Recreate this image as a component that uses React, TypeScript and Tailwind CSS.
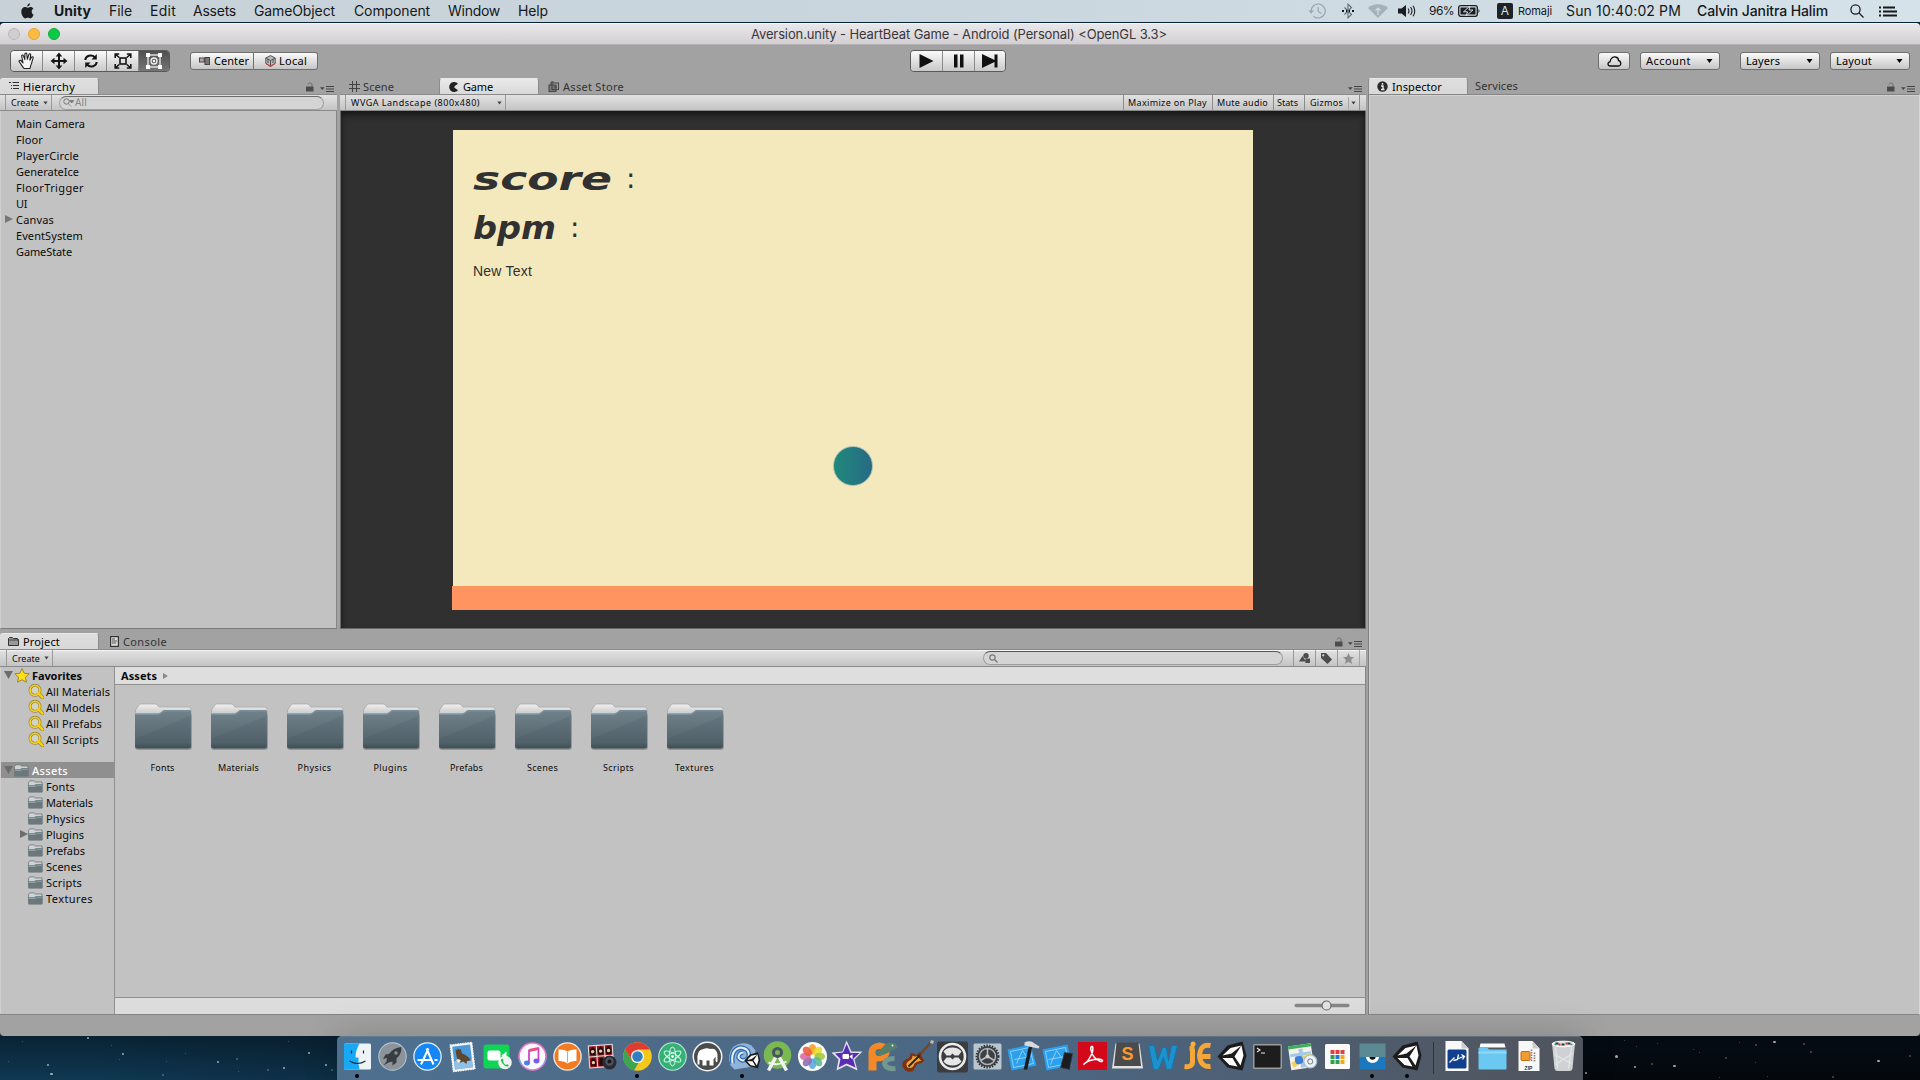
import React, { useLayoutEffect, useRef } from "react";

const UI = "font-['Lucida_Grande','Noto_Sans',sans-serif]";
const SF = "font-['Inter','Liberation_Sans',sans-serif]";

/* One-line label whose tracking is adjusted so that it spans w pixels. */
function T({ w, c = "", children }: { w: number; c?: string; children: string }) {
  const ref = useRef<HTMLSpanElement>(null);
  useLayoutEffect(() => {
    const el = ref.current;
    if (!el) return;
    el.style.letterSpacing = "0px";
    const natural = el.getBoundingClientRect().width;
    el.style.letterSpacing = `${(w - natural) / children.length}px`;
  }, [w, children]);
  return (
    <span ref={ref} className={`inline-block shrink-0 whitespace-pre ${c}`}>
      {children}
    </span>
  );
}

/* Same idea for the display lettering, stretched horizontally. */
function Wide({ w, children }: { w: number; children: string }) {
  const ref = useRef<HTMLSpanElement>(null);
  useLayoutEffect(() => {
    const el = ref.current;
    if (!el) return;
    el.style.transform = "none";
    el.style.transform = `scaleX(${w / el.getBoundingClientRect().width})`;
  }, [w]);
  return (
    <span className="inline-block" style={{ width: w }}>
      <span ref={ref} className="inline-block origin-left font-bold italic">{children}</span>
    </span>
  );
}

const Down = ({ c = "" }: { c?: string }) => (
  <svg width="7" height="4" viewBox="0 0 7 4" className={`shrink-0 ${c}`}><path d="M0.5 0h6L3.5 4z" fill="currentColor" /></svg>
);

const Lock = ({ c = "" }: { c?: string }) => (
  <svg width="8" height="10" viewBox="0 0 8 10" className={`shrink-0 ${c}`}>
    <rect x="0" y="4.5" width="7.5" height="5" fill="#4c4c4c" />
    <path d="M2 2.5C2.5 0.5 6 0.3 6 2.8V5" fill="none" stroke="#6a6a6a" strokeWidth="1" />
  </svg>
);

const PaneMenu = ({ c = "" }: { c?: string }) => (
  <svg width="14" height="6" viewBox="0 0 14 6" className={`shrink-0 ${c}`}>
    <path d="M0 1.3h4.6L2.3 4z" fill="#444" />
    <path d="M6 0.5h8M6 3h8M6 5.5h8" stroke="#444" strokeWidth="1" />
  </svg>
);

function MenuBar() {
  return (
    <div className={`${SF} flex h-[22px] items-center bg-linear-to-r from-[#c8d1d8] via-[#c9d6de] to-[#d5e2ea] pr-[23px] pl-[21px] text-[14px] leading-none text-[#15181c]`}>
      <svg width="13" height="16" viewBox="0 0 13 16" className="shrink-0">
        <path fill="#1b1d20" d="M9 0.3c.2 1.6-1.200 3.200-2.700 3.200C6.100 2 7.500.5 9 .3zM12.600 11.700c-.6 1.600-1.900 3.700-3.200 3.700-.9 0-1.300-.6-2.500-.6s-1.700.6-2.500.6C2.700 15.400.300 12 .300 8.700c0-3 1.900-4.600 3.700-4.600 1.100 0 1.900.7 2.700.7.700 0 1.700-.8 3-.8 1.100 0 2.100.6 2.700 1.500-2.400 1.500-2.200 5 .2 6.200z" />
      </svg>
      <T w={37} c="ml-[20px] font-bold">Unity</T>
      <T w={23} c="ml-[18px]">File</T>
      <T w={26} c="ml-[18px]">Edit</T>
      <T w={43} c="ml-[17px]">Assets</T>
      <T w={81} c="ml-[18px]">GameObject</T>
      <T w={76} c="ml-[19px]">Component</T>
      <T w={52} c="ml-[18px]">Window</T>
      <T w={30} c="ml-[18px]">Help</T>
      <div className="flex-1" />
      <svg width="19" height="16" viewBox="0 0 19 16" className="shrink-0 text-[#98a5ad]" fill="none" stroke="currentColor" strokeWidth="1.200">
        <path d="M3.200 8.500A7 7 0 1 1 5.500 13.200M10.200 4v4.500l3 2" /><path d="M0.500 7.500h5.400L3.200 10.700z" fill="currentColor" stroke="none" />
      </svg>
      <svg width="12" height="16" viewBox="0 0 12 16" className="ml-[15px] shrink-0" fill="none" stroke="#5d6a72" strokeWidth="1.100">
        <path d="M2.500 4.500l7 7L6 14.800V1.200l3.500 3.300-7 7" /><path d="M0 8h2M4 8h1M7 8h1M10 8h2" stroke="#15181c" strokeWidth="2" />
      </svg>
      <svg width="20" height="14" viewBox="0 0 20 14" className="ml-[14px] shrink-0"><path d="M0 4C5-1 15-1 20 4L10 14z" fill="#a5b1b9" /><path d="M10 11V4.500M7.500 6.500L10 4l2.500 2.500" stroke="#d2dde4" strokeWidth="1.200" fill="none" /></svg>
      <svg width="18" height="12" viewBox="0 0 18 12" className="ml-[10px] shrink-0"><path d="M0 3.500h3.500L8 0v12L3.500 8.500H0z" fill="#1b1d20" /><path d="M10 3.500q2 2.500 0 5M12.500 2q3 4 0 8M15 .8q3.500 5 0 10.500" stroke="#1b1d20" strokeWidth="1.100" fill="none" /></svg>
      <T w={25} c="ml-[13px] text-[12px]">96%</T>
      <svg width="23" height="12" viewBox="0 0 23 12" className="ml-[4px] shrink-0"><rect x=".7" y=".7" width="18.600" height="10.600" rx="2" fill="none" stroke="#1b1d20" strokeWidth="1.300" /><rect x="2.500" y="2.500" width="15" height="7" fill="#1b1d20" /><path d="M20.500 4q2 2 0 4z" fill="#1b1d20" /><path d="M12 1L5.500 6.800h4L8 11l7-6h-4z" fill="#1b1d20" stroke="#d2dde4" strokeWidth="1" /></svg>
      <div className="ml-[16px] flex h-4 w-4 shrink-0 items-center justify-center rounded-[2px] bg-[#1e2327] text-[12px] text-[#d5e2ea]">A</div>
      <T w={34} c="ml-[5px] text-[11px]">Romaji</T>
      <T w={115} c="ml-[14px]">Sun 10:40:02 PM</T>
      <T w={131} c="ml-4 font-medium">Calvin Janitra Halim</T>
      <svg width="14" height="14" viewBox="0 0 14 14" className="ml-[22px] shrink-0" fill="none" stroke="#1b1d20" strokeWidth="1.300"><circle cx="5.500" cy="5.500" r="4.600" /><path d="M9 9l4.500 4.500" /></svg>
      <svg width="18" height="11" viewBox="0 0 18 11" className="ml-[15px] shrink-0" stroke="#15181c" strokeWidth="1.800"><path d="M0 1.500h2M4 1.500h12M0 5.500h2M4 5.500h14M0 9.500h2M4 9.500h14" /></svg>
    </div>
  );
}

function TitleBar() {
  return (
    <div className={`${SF} flex h-[22px] items-center rounded-t-[4px] border-t border-b border-t-[#f6f4f6] border-b-[#b4b0b3] bg-linear-to-b from-[#eae7ea] to-[#d3d0d3] pl-2`}>
      <div className="h-3 w-3 rounded-full border border-[#bab7ba] bg-[#d0ced0]" />
      <div className="ml-2 h-3 w-3 rounded-full border border-[#e8a233] bg-[#fdbc40]" />
      <div className="ml-2 h-3 w-3 rounded-full border border-[#0faf35] bg-[#0dc94a]" />
      <T w={416} c="ml-[691px] text-[13px] leading-none text-[#39363a]">Aversion.unity - HeartBeat Game - Android (Personal) &lt;OpenGL 3.3&gt;</T>
    </div>
  );
}

const BTN = "flex shrink-0 items-center border-[#6e6e6e] bg-linear-to-b from-[#fafafa] to-[#c6c6c6]";

const tools = [
  <svg width="18" height="18" viewBox="0 0 18 18" fill="#f5f5f5" stroke="#222" strokeWidth="1.100" strokeLinejoin="round"><path d="M6 16.500C4 14 2.500 11.500 1 9.500 1 8 3 8 3.600 9.300L5 11 3.700 4.200c-.2-1.500 1.400-1.700 1.800-.3L6.800 7.600 6.900 2c0-1.300 1.700-1.300 1.900 0L9.300 7.300 10.900 2.500c.5-1.200 2-.8 1.800.5l-.9 5.200 1.700-3c.8-1 2-.3 1.600.9-.8 2.200-1.100 4.500-2.100 6.800-.5 1.200-.7 2.300-1 3.600z" /></svg>,
  <svg width="18" height="18" viewBox="0 0 18 18" fill="#151515"><path d="M9 .5l3.300 4H10v3.500h3.500V5.700l4 3.300-4 3.300V10H10v3.500h2.300l-3.300 4-3.300-4H8V10H4.500v2.300L.5 9l4-3.300V8H8V4.500H5.700z" /></svg>,
  <svg width="18" height="16" viewBox="0 0 18 16" fill="none" stroke="#151515" strokeWidth="2"><path d="M3.300 7C3.500 2.800 9.500.8 12.800 4.200M14.700 9c-.2 4.200-6.200 6.200-9.500 2.800" /><path d="M14.800 1v5.500H9.500zM3.200 15V9.500h5.300z" fill="#151515" stroke="none" /></svg>,
  <svg width="18" height="16" viewBox="0 0 18 16" fill="none" stroke="#151515" strokeWidth="1.600"><rect x="6" y="5" width="6" height="6" /><path d="M1.200 5V1h4M1.200 1l4 3.500M16.800 5V1h-4M16.800 1l-4 3.500M1.200 11v4h4M1.200 15l4-3.500M16.800 11v4h-4M16.800 15l-4-3.500" /></svg>,
  <svg width="18" height="18" viewBox="0 0 18 18" fill="none" stroke="#f0f0f0" strokeWidth="1.300"><rect x="3" y="3" width="12" height="12" /><g fill="#fff" stroke="none"><rect x="1" y="1" width="4" height="4" /><rect x="13" y="1" width="4" height="4" /><rect x="1" y="13" width="4" height="4" /><rect x="13" y="13" width="4" height="4" /><circle cx="9" cy="9" r="1.200" /></g><circle cx="9" cy="9" r="3" /></svg>,
];

function ToolBar() {
  return (
    <div className={`${UI} flex h-[33px] items-start pt-[5px] text-[11px] leading-none text-black`}>
      <div className="ml-[10px] flex h-[22px] w-40 overflow-hidden rounded-[4px] border border-[#5a5a5a]">
        {tools.map((t, i) => (
          <div key={i} className={`flex items-center justify-center border-[#8a8a8a] ${i < 4 ? "w-8 border-r bg-linear-to-b from-[#fafafa] to-[#c9c9c9]" : "flex-1 bg-linear-to-b from-[#505050] to-[#767676]"}`}>{t}</div>
        ))}
      </div>
      <div className={`${BTN} mt-[2px] ml-5 h-[18px] w-16 rounded-l-[3px] border pl-2`}>
        <svg width="11" height="8" viewBox="0 0 11 8"><rect x=".5" y="1" width="5" height="4" fill="#aaa" stroke="#444" /><rect x="6" y=".5" width="4.500" height="7" fill="#777" stroke="#444" /><path d="M4 3h3" stroke="#c33" /></svg>
        <T w={35} c="-mt-px ml-1">Center</T>
      </div>
      <div className={`${BTN} mt-[2px] h-[18px] w-16 rounded-r-[3px] border border-l-0 pl-[11px]`}>
        <svg width="11" height="12" viewBox="0 0 11 12"><path d="M5.500.6L10.200 3v5.500L5.500 11.400.8 8.500V3z" fill="#bbb" stroke="#555" /><path d="M.8 3l4.700 2.500L10.200 3M5.500 5.500v6M3 4v4M8 4v4" stroke="#555" fill="none" /><path d="M1 8.500l4.500 2.800L10 8.500" stroke="#c44" fill="none" strokeWidth="1.100" /></svg>
        <T w={28} c="-mt-px ml-[3px]">Local</T>
      </div>
      <div className="ml-[592px] flex h-[22px] w-24 overflow-hidden rounded-[4px] border border-[#5a5a5a]">
        <div className="flex w-8 items-center justify-center border-r border-[#8a8a8a] bg-linear-to-b from-[#fafafa] to-[#c9c9c9]"><svg width="15" height="14" viewBox="0 0 15 14"><path d="M.5 0l14 7-14 7z" fill="#111" /></svg></div>
        <div className="flex w-8 items-center justify-center border-r border-[#8a8a8a] bg-linear-to-b from-[#fafafa] to-[#c9c9c9]"><svg width="10" height="14" viewBox="0 0 10 14"><path d="M0 .5h3.500v13H0zM6 .5h3.500v13H6z" fill="#111" /></svg></div>
        <div className="flex flex-1 items-center justify-center bg-linear-to-b from-[#fafafa] to-[#c9c9c9]"><svg width="16" height="14" viewBox="0 0 16 14"><path d="M0 0l12.500 6V.5h3v13h-3V8L0 14z" fill="#111" /></svg></div>
      </div>
      <div className="flex-1" />
      <div className={`${BTN} mt-[2px] h-[18px] w-8 justify-center rounded-[3px] border`}>
        <svg width="15" height="11" viewBox="0 0 15 11"><path d="M3.500 10C.200 10 .200 6.200 3 5.800 3.500 2 6.500.5 8.500 1c2 .3 3 2 3 3.500 2.800.5 3.200 5.500 0 5.500z" fill="none" stroke="#111" strokeWidth="1.300" /></svg>
      </div>
      {([["Account", 45, "ml-[10px]"], ["Layers", 34, "ml-5"], ["Layout", 36, "ml-[10px] mr-[10px]"]] as [string, number, string][]).map(([l, w, m]) => (
        <div key={l} className={`${BTN} ${m} mt-[2px] h-[18px] w-20 justify-between rounded-[3px] border pr-[6px] pl-[5px]`}>
          <T w={w} c="-mt-px">{l}</T><Down />
        </div>
      ))}
    </div>
  );
}

const TAB = "flex items-center rounded-t-[3px] border border-b-0 border-[#8b8b8b] border-t-[#e8e8e8] bg-linear-to-b from-[#dedede] to-[#d9d9d9] text-black";
const BAR = "flex items-center border-t border-b border-t-[#8a8a8a] border-b-[#8a8a8a] bg-linear-to-b from-[#e2e2e2] to-[#c4c4c4]";

function Hierarchy() {
  const rows: [string, number][] = [["Main Camera", 69], ["Floor", 27], ["PlayerCircle", 63], ["GenerateIce", 63], ["FloorTrigger", 68], ["UI", 11], ["Canvas", 38], ["EventSystem", 67], ["GameState", 56]];
  return (
    <div className="flex w-[337px] flex-col">
      <div className="flex h-4 items-end">
        <div className={`${TAB} h-4 w-[99px] border-l-0 pl-[9px]`}>
          <svg width="10" height="9" viewBox="0 0 10 9" stroke="#333"><path d="M0 .5h2M3.500.5h6.500M2 3.500h1M4 3.500h6M2 6.500h1M4 6.500h6" /></svg>
          <T w={52} c="ml-1">Hierarchy</T>
        </div>
        <Lock c="ml-[207px] mb-[2px]" /><PaneMenu c="ml-[6px] mb-[2px]" />
      </div>
      <div className={`${BAR} h-[17px] text-[9px]`}>
        <div className="ml-[5px] flex h-full w-[47px] items-center border-r border-l border-[#9a9a9a] pl-[5px]"><T w={28}>Create</T><Down c="ml-1 w-[5px] text-[#444]" /></div>
        <div className="ml-[7px] flex h-[14px] w-[265px] items-center rounded-full border border-[#a0a0a0] border-t-[#6b6b6b] bg-[#d4d4d4] pl-[3px] text-[#888]">
          <svg width="11" height="9" viewBox="0 0 11 9"><circle cx="3.500" cy="3.500" r="2.700" fill="none" stroke="#777" /><path d="M5.500 5.500l2.500 3M6.500 2.500h4.500L8.700 5z" fill="#777" stroke="#777" strokeWidth=".7" /></svg>
          <T w={12} c="-mt-px ml-px text-[10px]">All</T>
        </div>
      </div>
      <div className="flex-1 border-r border-b border-l border-r-[#858585] border-b-[#7c7c7c] border-l-[#d0d0d0] bg-[#c2c2c2] pt-1">
        {rows.map(([l, w]) => (
          <div key={l} className="flex h-4 items-center pl-[3px]">
            <div className="w-3">{l === "Canvas" && <svg width="9" height="8" viewBox="0 0 9 8"><path d="M1 0l8 4-8 4z" fill="#777" /></svg>}</div>
            <T w={w}>{l}</T>
          </div>
        ))}
      </div>
    </div>
  );
}

function Game() {
  return (
    <div className="ml-[3px] flex w-[1026px] flex-col">
      <div className="flex h-4 items-end text-[#333]">
        <div className="flex h-4 items-center pl-[9px]">
          <svg width="11" height="11" viewBox="0 0 11 11" stroke="#444"><path d="M3.500 0v11M7.500 0v11M0 3.500h11M0 7.500h11" /></svg>
          <T w={31} c="ml-[3px]">Scene</T>
        </div>
        <div className={`${TAB} ml-[45px] h-4 w-[100px] from-[#eaeaea] pl-[9px]`}>
          <svg width="10" height="10" viewBox="0 0 10 10"><path d="M9 1.800A5 5 0 1 0 9 8.200L5.500 5.800V4.200z" fill="#222" /></svg>
          <T w={30} c="ml-1">Game</T>
        </div>
        <div className="ml-[9px] flex h-4 items-center">
          <svg width="11" height="11" viewBox="0 0 11 11"><rect x="1" y="4" width="7" height="6.500" fill="#777" stroke="#444" /><rect x="4" y="2" width="6.500" height="6.500" fill="none" stroke="#444" /><path d="M3 4V1h3M6 6h3" stroke="#444" fill="none" /></svg>
          <T w={61} c="ml-[4px]">Asset Store</T>
        </div>
        <div className="flex-1" /><PaneMenu c="mr-1 mb-[2px]" />
      </div>
      <div className={`${BAR} h-[17px] text-[9px]`}>
        <div className="ml-[5px] flex h-full w-[161px] items-center border-r border-l border-[#9a9a9a] pl-[5px]"><T w={129}>WVGA Landscape (800x480)</T><Down c="ml-[17px] w-[5px] text-[#444]" /></div>
        <div className="flex-1" />
        <div className="flex h-full w-[89px] items-center border-l border-[#8c8c8c] pl-1"><T w={79}>Maximize on Play</T></div>
        <div className="flex h-full w-[61px] items-center border-l border-[#8c8c8c] pl-1"><T w={51}>Mute audio</T></div>
        <div className="flex h-full w-[31px] items-center border-l border-[#8c8c8c] pl-[3px]"><T w={21}>Stats</T></div>
        <div className="flex h-full w-[56px] items-center border-r border-l border-[#8c8c8c] pl-[5px]"><T w={33}>Gizmos</T><div className="ml-[5px] h-3 w-px bg-[#a5a5a5]" /><Down c="ml-[2px] w-[5px] text-[#444]" /></div>
        <div className="w-[6px]" />
      </div>
      <div className="flex flex-1 justify-start border-r border-b border-l border-[#6a6a6a] bg-[#303030] pt-[19px] pl-[112px] shadow-[inset_0_4px_6px_#161616]">
        <div className="-ml-px flex h-[480px] w-[801px] flex-col overflow-hidden">
          <div className="relative ml-px flex-1 bg-[#f4e8bd] text-[#313131]">
            <div className="flex h-[66px] items-end pl-5 font-['DejaVu_Sans',sans-serif] text-[32px] leading-[34px]"><Wide w={139}>score</Wide><span className="ml-[14px] text-[28px]">:</span></div>
            <div className="mt-[15px] flex h-[34px] items-end pl-5 font-['DejaVu_Sans',sans-serif] text-[32px] leading-[34px]"><Wide w={83}>bpm</Wide><span className="ml-[14px] text-[28px]">:</span></div>
            <div className="mt-[19px] pl-5 font-['Liberation_Sans',sans-serif] text-[14px]"><T w={59}>New Text</T></div>
            <div className="absolute top-[316px] left-[380px] h-[40px] w-[40px] rounded-full border border-[#a9c0ae] bg-linear-to-r from-[#20897a] to-[#276a86]" />
          </div>
          <div className="h-6 bg-[#ff9460]" />
        </div>
      </div>
    </div>
  );
}

const SmallFolder = () => (
  <svg width="15" height="13" viewBox="0 0 15 13" className="shrink-0"><path d="M.5 12V2.500L2 .8h4L7.500 2H14v10z" fill="#cdd3d4" stroke="#6c7577" strokeWidth=".8" /><path d="M.5 5.300h6L7.800 4h6.700v8.200H.5z" fill="#6a787c" /><path d="M1 6.500h6L8.500 5.200H14" stroke="#9cabae" fill="none" strokeWidth=".8" /></svg>
);
const Mag = () => (
  <svg width="16" height="15" viewBox="0 0 16 15" className="shrink-0"><path d="M10.500 9.500l4 4" stroke="#8a6d10" strokeWidth="3.800" strokeLinecap="round" /><circle cx="7" cy="6.300" r="5" fill="#d5d3c8" stroke="#8a7a3a" strokeWidth="2.800" /><circle cx="7" cy="6.300" r="5" fill="none" stroke="#f5d11c" strokeWidth="1.800" /><path d="M10.500 9.500l4 4" stroke="#f7cf12" strokeWidth="2.600" strokeLinecap="round" /></svg>
);
const Tri = ({ open = false }: { open?: boolean }) => (
  <svg width="9" height="8" viewBox="0 0 9 8" className="shrink-0"><path d={open ? "M0 0h9L4.500 8z" : "M1 0l8 4-8 4z"} fill="#6c6c6c" /></svg>
);
const BigFolder = () => (
  <svg width="58" height="48" viewBox="0 0 58 48">
    <defs>
      <linearGradient id="ff" x2="0" y2="1"><stop offset="0" stopColor="#71828b" /><stop offset=".85" stopColor="#53646c" /><stop offset="1" stopColor="#3e4d54" /></linearGradient>
      <linearGradient id="fb" x2="0" y2="1"><stop offset="0" stopColor="#f0f0f0" /><stop offset="1" stopColor="#bdbdbd" /></linearGradient>
    </defs>
    <rect x="1" y="10" width="57" height="37" rx="3" fill="#000" opacity=".22" />
    <path d="M1.500 12V7L5 2q.5-1 2-1h14q1.500 0 2 1l2 2H55q2 0 2 2v8H1.500z" fill="url(#fb)" stroke="#a4a4a4" strokeWidth=".7" />
    <path d="M1 12q0-1.500 1.500-1.500H24q1.500 0 2.500-1l2-1.500q1-1 2-1H55.500q1.500 0 1.500 1.500V43q0 2.500-2.500 2.500h-51Q1 45.500 1 43z" fill="url(#ff)" />
    <path d="M2 11.300H24q2 0 3-1.200l2-1.500q.8-.7 2-.7H56" stroke="#7f9cae" fill="none" strokeWidth=".9" />
    <path d="M2 36L56 13V43H2z" fill="#3f525c" opacity=".17" />
  </svg>
);

function Project() {
  const tree: [string, number][] = [["Fonts", 29], ["Materials", 47], ["Physics", 39], ["Plugins", 38], ["Prefabs", 39], ["Scenes", 36], ["Scripts", 36], ["Textures", 47]];
  const grid: [string, number][] = [["Fonts", 24], ["Materials", 41], ["Physics", 34], ["Plugins", 34], ["Prefabs", 33], ["Scenes", 31], ["Scripts", 31], ["Textures", 39]];
  const favs: [string, number][] = [["All Materials", 64], ["All Models", 54], ["All Prefabs", 56], ["All Scripts", 53]];
  return (
    <div className="flex h-[382px] flex-col">
      <div className="flex h-4 items-end">
        <div className={`${TAB} h-4 w-[99px] border-l-0 pl-2`}>
          <svg width="11" height="9" viewBox="0 0 11 9"><path d="M.5 8.500V1.500L1.500.5h3l1 1h4v1h1v6z" fill="#999" stroke="#333" /><path d="M1 3h9" stroke="#444" /></svg>
          <T w={37} c="ml-1">Project</T>
        </div>
        <div className="ml-[11px] flex h-4 items-center text-[#333]">
          <svg width="9" height="11" viewBox="0 0 9 11"><rect x=".6" y=".6" width="7.800" height="9.800" fill="#ddd" stroke="#333" strokeWidth="1.200" /><path d="M2 3h3M2 5h5M2 7h4" stroke="#444" strokeWidth=".9" /></svg>
          <T w={44} c="ml-1">Console</T>
        </div>
        <div className="flex-1" /><Lock c="mb-[2px]" /><PaneMenu c="mr-1 mb-[2px] ml-[5px]" />
      </div>
      <div className={`${BAR} h-[18px] text-[9px] shadow-[inset_0_1px_0_#f4f4f4]`}>
        <div className="ml-[6px] flex h-full w-[47px] items-center border-r border-l border-[#9a9a9a] pl-[5px]"><T w={28}>Create</T><Down c="ml-1 w-[5px] text-[#444]" /></div>
        <div className="ml-[930px] flex h-[14px] w-[300px] items-center rounded-full border border-[#9d9d9d] border-t-[#555] bg-[#d4d4d4] pl-[5px]">
          <svg width="9" height="9" viewBox="0 0 9 9" fill="none" stroke="#777" strokeWidth="1.200"><circle cx="3.500" cy="3.500" r="2.700" /><path d="M5.500 5.500L8.500 8.500" /></svg>
        </div>
        <div className="ml-[10px] flex h-full w-[22px] items-center justify-center border-l border-[#999]"><svg width="11" height="10" viewBox="0 0 11 10" fill="#4c4c4c"><circle cx="7" cy="2.700" r="2.700" /><path d="M3.500 3L7 8.500H0zM6.500 5.500H11V10H6.500z" /></svg></div>
        <div className="flex h-full w-[22px] items-center justify-center border-l border-[#999]"><svg width="11" height="11" viewBox="0 0 11 11"><path d="M0 0h5l6 6.500L6.500 11 0 5z" fill="#4c4c4c" /><circle cx="2.300" cy="2.300" r="1.100" fill="#ddd" /></svg></div>
        <div className="flex h-full w-[22px] items-center justify-center border-l border-[#999]"><svg width="11" height="11" viewBox="0 0 24 24" fill="#8c8c8c"><path d="M12 0l3.600 8.200 8.400.8-6.300 5.800L19.500 24 12 19l-7.500 5 1.800-9.200L0 9l8.400-.8z" /></svg></div>
        <div className="h-full w-px bg-[#a5a5a5]" />
      </div>
      <div className="flex flex-1 border-r border-b border-[#858585]">
        <div className="w-[115px] overflow-hidden border-r border-l border-r-[#8f8f8f] border-l-[#d0d0d0] bg-[#c2c2c2]">
          <div className="flex h-4 items-center pl-[3px]"><Tri open /><svg width="16" height="15" viewBox="0 0 24 23" className="ml-[1px]"><path d="M12 1l3.300 7 7.700.9-5.700 5.200 1.500 7.600L12 18l-6.800 3.700 1.500-7.600L1 8.900 8.700 8z" fill="#ffdf1c" stroke="#9a8020" strokeWidth="1.400" /></svg><T w={50} c="ml-[2px] font-bold">Favorites</T></div>
          {favs.map(([l, w]) => <div key={l} className="flex h-4 items-center pl-[27px]"><Mag /><T w={w} c="ml-[2px]">{l}</T></div>)}
          <div className="mt-[15px] flex h-4 items-center bg-[#8f8f8f] pl-[3px] text-white"><Tri open /><div className="ml-px"><SmallFolder /></div><T w={36} c="ml-[3px] font-medium">Assets</T></div>
          {tree.map(([l, w]) => <div key={l} className="flex h-4 items-center pl-[18px]"><div className="w-[9px]">{l === "Plugins" && <Tri />}</div><SmallFolder /><T w={w} c="ml-[3px]">{l}</T></div>)}
        </div>
        <div className="flex flex-1 flex-col bg-[#c2c2c2]">
          <div className="flex h-[18px] items-center border-b border-[#8f8f8f] bg-[#dedede] pl-[6px]"><T w={36} c="font-bold">Assets</T><svg width="5" height="6" viewBox="0 0 5 6" className="ml-[6px]"><path d="M0 0l5 3-5 3z" fill="#888" /></svg></div>
          <div className="flex flex-1 pt-[18px] pl-[10px] text-[9px]">
            {grid.map(([l, w]) => <div key={l} className="flex w-[76px] flex-col items-center"><BigFolder /><T w={w} c="mt-[12px] mr-[1px]">{l}</T></div>)}
          </div>
          <div className="flex h-[17px] items-center justify-end border-t border-[#8f8f8f] bg-[#dcdcdc] pr-[15px] pb-px">
            <svg width="56" height="11" viewBox="0 0 56 11"><rect x=".5" y="3.800" width="55" height="3.400" rx="1.700" fill="#868686" /><circle cx="32.500" cy="5.500" r="4.500" fill="#e2e2e2" stroke="#6c6c6c" strokeWidth="1.200" /></svg>
          </div>
        </div>
      </div>
    </div>
  );
}

function Inspector() {
  return (
    <div className="ml-[2px] flex flex-1 flex-col">
      <div className="flex h-4 items-end">
        <div className={`${TAB} h-4 w-[100px] pl-2`}>
          <svg width="11" height="11" viewBox="0 0 11 11"><circle cx="5.500" cy="5.500" r="5.200" fill="#2a2a2a" /><path d="M5.500 2v1.800M4 5h2v3.500M4 8.500h3.500" stroke="#eee" strokeWidth="1.400" fill="none" /></svg>
          <T w={50} c="ml-1">Inspector</T>
        </div>
        <div className="flex h-4 items-center pb-[2px] text-[#333]"><T w={43} c="ml-[7px]">Services</T></div>
        <div className="flex-1" /><Lock c="mb-[2px]" /><PaneMenu c="mr-[5px] mb-[2px] ml-[6px]" />
      </div>
      <div className="flex-1 border border-t-[#858585] border-r-[#d6d6d6] border-b-[#858585] border-l-[#7e7e7e] bg-[#c2c2c2] shadow-[inset_1px_1px_0_#d2d2d2]" />
    </div>
  );
}

const unity = (
  <><path d="M-15 0L-5-11 10-15 14-1 10 14-5 11z" fill="#1c1c1c" /><path d="M-10-1L-2-8.500 9-11-1-3zM-10 1.500L0 1.500 5 10-3 8.500zM2 0L9-11 11-1 8 9z" fill="#fff" /><path d="M-4-2.500L3-7.500M-4 2.500L0 8" stroke="#ddd" strokeWidth=".6" /></>
);
const petals = ["#f7a01c", "#ecd92c", "#9ccb3b", "#5ab88e", "#58a8de", "#8a6ab5", "#d66aa0", "#ef5a3a"];

const apps: [React.ReactNode, boolean][] = [
  [<><rect x="-13.500" y="-13" width="27" height="26" rx="1.500" fill="#eef3f8" /><path d="M2-13q-4 7-4 14h3q-.5 6 1 12H-12a1.500 1.500 0 0 1-1.500-1.500v-23A1.500 1.500 0 0 1-12-13z" fill="#18a8f4" /><path d="M-6-6v3M6-6v3M-8 4.500Q0 9.500 8 4.500" stroke="#152a3c" strokeWidth="1.200" fill="none" /></>, true],
  [<><circle r="14.200" fill="#c6ccd0" /><circle r="13.300" fill="#8b949a" /><path d="M9-9.500Q1-9-3.500-2.500L-7-2-9.500 2.500-5.500 1.500-6 5-9 9l5-3 4-1 0 4L4 6V2Q9-2 9-9.500z" fill="#393d41" /><circle cx="3.500" cy="-3.500" r="1.700" fill="#8b949a" /></>, false],
  [<><circle r="14.300" fill="#e4ecf3" /><circle r="13" fill="#1587f5" /><path d="M-1-8L6 8M1-8L-6.500 8M-10 3.500H4M7 3.500h3" stroke="#fff" strokeWidth="2" fill="none" /></>, false],
  [<g transform="rotate(-7)"><rect x="-11" y="-13" width="22" height="27" fill="#f4f4f2" stroke="#fff" strokeDasharray="1.500 1" /><rect x="-9" y="-11" width="18" height="23" fill="#4b9bdc" /><path d="M-9 4h18v8H-9z" fill="#8fc1e8" /><path d="M-6-8l2 1 0-2 2 2 1-1 1 5q5 2 8 8l-4 0-1 3-3-3-3 1Q-7 1-6-8z" fill="#5e472e" /><path d="M-7 3q3-2 5 1l-3 2z" fill="#eee" /><path d="M-8 4l2-1v2z" fill="#e8a32a" /></g>, false],
  [<><rect x="-14" y="-12" width="26" height="24" rx="3" fill="#10d455" /><rect x="-10" y="-6" width="13" height="10" rx="2" fill="#fff" /><path d="M4-1l5-4V4z" fill="#fff" /><circle cx="7.500" cy="6" r="6.800" fill="#f2f4f3" /><path d="M4 2.500q1-1 2 1l-.5 1.500q1 2.500 3 3.500l1.500-.8q2 1 1 2Q8.500 11 5.500 7.500T4 2.500z" fill="#16c653" /></>, false],
  [<><circle r="14.300" fill="#f272c7" /><path d="M-14 2a14.300 14.300 0 0 0 28-2Q5 10-14 2z" fill="#5f9ff8" /><circle r="12.700" fill="#fcfaff" /><path d="M-3.500 6.500V-6L6-8V4" fill="none" stroke="#c94ac0" strokeWidth="1.800" /><path d="M-3.500-7.500L6-9.500v3l-9.500 2z" fill="#ef4f86" /><ellipse cx="-5.500" cy="6.500" rx="3" ry="2.400" fill="#4d7ef0" /><ellipse cx="4" cy="4.500" rx="3" ry="2.400" fill="#7a5ee8" /></>, false],
  [<><circle r="14.300" fill="#eeeae5" /><circle r="13" fill="#f37a20" /><path d="M0-5Q-3-7.500-9-7V4.500Q-3 4 0 7 3 4 9 4.500V-7Q3-7.500 0-5z" fill="#fff" /><path d="M0-5V6" stroke="#f0a060" /></>, false],
  [<><g transform="rotate(-4)"><rect x="-14" y="-12" width="25" height="23" fill="#e8e4e2" /><path d="M-13-11h7v10h-7zM-5-11h7v10h-7zM3-11h7v10H3zM-13 0h7v10h-7zM-5 0h7v10h-7z" fill="#a8141c" /><path d="M-12-2q-1-8 2.500-8T-7-2zM-4-2q-1-8 2.500-8T1-2zM4-2q-1-8 2.500-8T9-2zM-12 9q-1-8 2.500-8T-7 9zM-4 9q-1-8 2.500-8T1 9z" fill="#220c0c" /><g fill="#f0c8a8"><circle cx="-9.500" cy="-5.500" r="1.700" /><circle cx="-1.500" cy="-5.500" r="1.700" /><circle cx="6.500" cy="-5.500" r="1.700" /><circle cx="-9.500" cy="5.500" r="1.700" /></g></g><circle cx="7" cy="6" r="7" fill="#2b2b30" /><circle cx="7" cy="5" r="4.200" fill="#4c5260" /><circle cx="7" cy="5" r="2" fill="#15181f" /></>, false],
  [<><circle r="14.300" fill="#f3c81d" /><path d="M-12.400-7.200A14.300 14.300 0 0 1 12.500-7H0L-6 3.500z" fill="#df3b2f" /><path d="M-12.400-7.200L-6 3.500Q-3 7 1 6.500L-3.500 14A14.300 14.300 0 0 1-12.400-7.200z" fill="#3da551" /><circle r="6.600" fill="#f4f4f4" /><circle r="5.200" fill="#2f7fc4" /></>, true],
  [<><circle r="14.300" fill="#bfe8d0" /><circle r="13.200" fill="#34b177" /><g fill="none" stroke="#e6f8ee" strokeWidth="1"><ellipse rx="3.300" ry="9.500" /><ellipse rx="3.300" ry="9.500" transform="rotate(60)" /><ellipse rx="3.300" ry="9.500" transform="rotate(-60)" /></g><circle r="1.400" fill="#fff" /></>, false],
  [<><circle r="15" fill="#f4f4f4" /><circle r="13.500" fill="#4c4b4b" /><path d="M-10 4Q-11-7-4-7.500-1-9 3-7.500 9-8.500 10-2v7q-1.500 2-2-1V0L6 3V9H2V4H-1V9H-5V4L-8 3V8h-2z" fill="#fff" /></>, false],
  [<><path d="M-12 9Q-16-2-9-10 0-16 9-11L13-6 11 10-8 13z" fill="#8fb3da" /><path d="M-10 7Q-12-7-2-9 8-8 6 1 0 7-4 1-4-4 1-4" fill="none" stroke="#2f6bb0" strokeWidth="4.500" /><path d="M-10 7Q-12-7-2-9 8-8 6 1 0 7-4 1-4-4 1-4" fill="none" stroke="#e6f0f8" strokeWidth="2" /><g transform="translate(10 4) scale(.55)">{unity}</g></>, true],
  [<><circle cy="-1.500" r="13.800" fill="#7cb852" /><circle cy="-4" r="4" fill="none" stroke="#46555f" strokeWidth="3" /><path d="M-2 1L-9 14M2 1L9 14" stroke="#f0f2f0" strokeWidth="3.500" /><path d="M-9 6Q0 10 9 5" fill="none" stroke="#f0f2f0" strokeWidth="2" /></>, false],
  [<><circle r="14.500" fill="#fbfbfb" />{petals.map((c, i) => <ellipse key={c} cy="-7.300" rx="3.800" ry="5.300" fill={c} fillOpacity=".88" transform={`rotate(${i * 45})`} />)}</>, false],
  [<><path d="M-1-16L4-5 15-5 7 3 10 14-1 9-11 14-9 3-16-4-5-5z" fill="#e4e0f2" /><path d="M-.8-12.500L3-3.500 12-3.500 5.500 2.500 8 11-1 7-8.800 11-7 2.500-12.500-3-4.500-4z" fill="#5a2bb4" /><rect x="-5" y="-2.500" width="6.500" height="5" rx="1" fill="#fff" /><path d="M2 0l3-2.500V3z" fill="#fff" /></>, false],
  [<><path d="M-14 14V-5Q-13-13-3-14 8-13 7-3 5 5-6 5V14z" fill="#f4892a" /><circle cx="-3.500" cy="-4" r="3.500" fill="#4e6b86" /><path d="M13 12Q3 13 2 7 3 2 12 2" fill="none" stroke="#73988d" strokeWidth="5" /><path d="M-7-4Q-3 1 4-3T15-9Q14-14 8-14 2-13 0-9-4-5-7-4z" fill="#557f6c" /><circle cx="10" cy="-11" r="1" fill="#eee" /></>, false],
  [<><path d="M14-15L1 0" stroke="#6b4a30" strokeWidth="2.600" /><path d="M13-15l3 1" stroke="#c9b9a5" strokeWidth="3" /><path d="M-7-3Q-3-4-2-1L3-5Q3 0 7 4 4 8 0 7-2 10-4 14-9 17-13 13-18 7-12 3-7 2-7-3z" fill="#7a3210" /><path d="M-5-1Q-3 1 1-1 1 3 4 4-1 5-3 7-5 13-10 11-13 7-8 4-5 3-5-1z" fill="#f0a43a" /><path d="M-9 10L2-1" stroke="#222" strokeWidth="1.800" /></>, false],
  [<><rect x="-15.500" y="-15" width="31" height="31" rx="2" fill="#3b3c3f" /><circle r="12.500" fill="none" stroke="#ececec" strokeWidth="2.600" /><path d="M-9-5q3-4 9-4t9 4L6-1H2L0-3l-2 2h-4zM-9 5q3 4 9 4t9-4L6 1H2L0 3l-2-2h-4z" fill="#e6e6e6" /></>, false],
  [<><rect x="-14" y="-13" width="28" height="26" rx="1.500" fill="#b9c6cd" /><circle r="10.500" fill="#3c4044" /><circle r="11" fill="none" stroke="#30343a" strokeWidth="2" strokeDasharray="1.500 1.300" /><circle r="8" fill="none" stroke="#aeb4b8" strokeWidth="1.500" /><path d="M0 0V-7.500M0 0l6.500 3.700M0 0l-6.500 3.700" stroke="#b8bec2" strokeWidth="1.600" /><circle r="2" fill="#ccc" /></>, false],
  [<><path d="M-15-7L8-12 14 9-11 14z" fill="#2aa0ee" /><path d="M-12-5L7-9 11 7-9 11z" fill="none" stroke="#8fd0fa" /><path d="M-6 7L0-6 7 5M-8 3L8 0" stroke="#8fd0fa" fill="none" /><path d="M8-10L3 13" stroke="#1b1b1e" strokeWidth="3.500" /><path d="M2-14Q8-17 12-13l5 3-1 2-5-1-9-2z" fill="#d6dade" /></>, false],
  [<><path d="M-15-7L10-12 14 9-11 14z" fill="#2aa0ee" /><path d="M-12-5L8-9 11 7-9 11z" fill="none" stroke="#8fd0fa" /><path d="M-7 8L-1-6 7 5M-9 3L8 0" stroke="#8fd0fa" fill="none" /><path d="M7-4l8 1-3 16-9-2z" fill="#1b1c20" stroke="#3a3c40" strokeWidth=".7" /></>, false],
  [<><rect x="-14.500" y="-14.500" width="29" height="28" fill="#d3091a" /><path d="M-9 8C-4 5 2-5 0-10-3-11-2-4 2 1 6 5 10 6 10 4 8 1-4 3-9 8z" fill="none" stroke="#fff" strokeWidth="1.500" /></>, false],
  [<><path d="M-12-13H12L15.500 12H-15.500z" fill="#e2e2e0" /><path d="M-11-14H11L13.500 9.500H-13.500z" fill="#4b4b4b" /><text x="0" y="3.500" textAnchor="middle" fontSize="18" fontWeight="bold" fontFamily="Liberation Sans" fill="#f79a32">S</text></>, false],
  [<><path d="M-14-11h6L-5 4 0-9H4L6 4 9-11h6L9 13H4L1 1-4 13H-9z" fill="#1c91cb" stroke="#1474ae" strokeWidth="1" /></>, false],
  [<><path d="M-5-8V5Q-5 11-13 10M-8-8h5" stroke="#f6a73a" strokeWidth="5" fill="none" /><circle cx="-4.500" cy="-12.500" r="2.500" fill="#f6b045" /><path d="M13-11Q3-13 2-1 3 11 13 10M3 0h10" stroke="#f6a73a" strokeWidth="5" fill="none" /></>, false],
  [unity, false],
  [<><rect x="-14.500" y="-12.500" width="29" height="25" rx="1.500" fill="#9b9b9b" /><rect x="-13" y="-11" width="26" height="22" fill="#1d1d1d" /><path d="M-10.500-8.500l3 2-3 2M-6.500-3.500h4" stroke="#eee" strokeWidth="1.100" fill="none" /></>, false],
  [<g transform="rotate(-8)"><rect x="-13" y="-12" width="23" height="24" fill="#f3f1ea" /><path d="M-13-12H10v3H-13z" fill="#3ab15a" /><path d="M-12-4H9v3H-12zM-3-8H1V11h-4z" fill="#9ecbe8" /><path d="M-12 5l20-8v4l-18 9z" fill="#f4d25a" /><rect x="-8" y="-1" width="8" height="8" rx="3" fill="#3d7fd6" /><circle cx="7" cy="6" r="6.500" fill="#edf2f5" stroke="#a9b8c2" strokeWidth="1.200" /><circle cx="7" cy="6" r="2.500" fill="none" stroke="#7a8a94" /></g>, false],
  [<><rect x="-12.500" y="-12.500" width="25" height="25" rx="1.500" fill="#fafafa" /><g><path d="M-7-6.500h4v4h-4zM-2-6.500h4v4h-4zM3-6.500h4v4H3z" fill="#e03e3e" /><path d="M-7-1.500h4v4h-4z" fill="#2aa24a" /><path d="M-2-1.500h4v4h-4z" fill="#2f6fe0" /><path d="M3-1.500h4v4H3z" fill="#f2a81d" /><path d="M-7 3.500h4v4h-4zM-2 3.500h4v4h-4z" fill="#2aa24a" /><path d="M3 3.500h4v4H3z" fill="#f2a81d" /></g></>, false],
  [<><rect x="-13" y="-13" width="26" height="13.500" fill="#5c8a94" /><rect x="-13" y=".5" width="26" height="12.500" fill="#1b78bf" /><path d="M-6.500.5a6.500 6 0 0 0 13 0z" fill="#fff" /><path d="M-3 .5a3 2.800 0 0 0 6 0z" fill="#111" /></>, true],
  [unity, true],
];

const files = [
  <><path d="M-12-15.500H4L11-8V14.500h-23z" fill="#fafafa" /><path d="M4-15.500V-8h7z" fill="#ccc" /><rect x="-10" y="-7" width="19" height="19" rx="1.500" fill="#103f8d" /><path d="M-8 6L-3 1M-4 4l4-1 1-5M1 2l5-2M4-2l3 2-2 3" stroke="#fff" strokeWidth="1.300" fill="none" /></>,
  <><path d="M-13-9l1-4h24l1 4z" fill="#fafafa" /><path d="M-14-8.500h9l2 1.500H14V12q0 1-1 1h-26q-1 0-1-1z" fill="#6bc8f1" /><path d="M-14-5H14v2H-14z" fill="#8fdaf8" /></>,
  <><path d="M-10-15.500H4L11-8V14.500h-21z" fill="#f8f8f8" /><path d="M4-15.500V-8h7z" fill="#ccc" /><rect x="-7.500" y="-5" width="9" height="9" rx="1" fill="#f09c32" stroke="#c07010" /><path d="M3-7v12M6-4v10" stroke="#8d7c72" strokeWidth="1.600" strokeDasharray="1.500 1" /><text x="0" y="13" textAnchor="middle" fontSize="5" fontWeight="bold" fontFamily="Liberation Sans" fill="#333">ZIP</text></>,
  <><path d="M-11.500-13h23L9 12q-.5 2.500-3 2.500H-6Q-8.500 14.500-9 12z" fill="#cfd1d4" /><path d="M-8-9L-6 12M8-9L5 12M-9-2l17 9M9-3L-8 8" stroke="#e4e6e8" strokeWidth="1.300" /><ellipse cy="-12.500" rx="11.500" ry="2.800" fill="#e6e6e6" stroke="#fff" /><path d="M-8-13h3M-2-12h3M4-13h3" stroke="#333" strokeWidth="2" /><path d="M-5-12h2M2-13h2" stroke="#b33a3a" strokeWidth="2" /><path d="M-9-12h2M7-12h2" stroke="#2a9a6a" strokeWidth="1.500" /></>,
];

function DockItem({ icon, dot = false }: { icon: React.ReactNode; dot?: boolean }) {
  return (
    <div className="flex w-[35px] shrink-0 flex-col items-center pt-[3px]">
      <svg width="35" height="35" viewBox="-17.500 -17.500 35 35" overflow="visible">{icon}</svg>
      {dot && <div className="mr-px h-1 w-1 rounded-full bg-black" />}
    </div>
  );
}

const stars: [number, number, number][] = [[22, 5, 1], [87, 2, 2], [111, 9, 1], [122, 18, 2], [119, 23, 1], [8, 25, 1], [47, 29, 2], [50, 38, 2.500], [166, 25, 1], [162, 39, 1.500], [217, 26, 2], [236, 23, 1.500], [238, 35, 1], [267, 34, 1.500], [283, 32, 2], [288, 5, 1], [308, 17, 2], [325, 29, 2], [331, 34, 1.500], [185, 17, 1], [1585, 37, 2], [1624, 4, 1], [1615, 20, 3], [1636, 10, 1], [1634, 31, 2], [1651, 28, 1.500], [1673, 30, 2.500], [1657, 7, 1], [1693, 13, 1], [1699, 16, 1], [1725, 22, 1.500], [1719, 41, 1], [1739, 6, 1], [1755, 9, 1.500], [1755, 26, 1], [1773, 6, 2.500], [1767, 40, 1], [1803, 8, 1.500], [1810, 16, 1.500], [1832, 41, 1.500], [1877, 25, 2.500], [1909, 20, 1.500]];

function Dock() {
  return (
    <div className="relative flex h-11 bg-linear-to-r from-[#0f3853] from-[5%] via-[#0a2335] via-[35%] to-[#04080d] to-[80%] pl-[337px]">
      <div className="absolute inset-0 bg-linear-to-b from-[#04101888] to-transparent" />
      {stars.map(([x, y, s], i) => (
        <div key={i} className="absolute rounded-full bg-[#c2cdd4]" style={{ left: x, top: y - s / 2, width: s, height: s, opacity: s > 1.5 ? 0.8 : 0.35 }} />
      ))}
      <div className="relative flex w-[1246px] rounded-t-[5px] bg-linear-to-r from-[#4e708f] via-[#4c6580] via-[60%] to-[#50545c] pl-[3px] shadow-[inset_0_1px_0_#75869088,0_0_35px_#00000030]">
        {apps.map(([icon, dot], i) => <DockItem key={i} icon={icon} dot={dot} />)}
        <div className="mt-[6px] ml-[8px] h-8 w-px bg-[#2b3340]" />
        <div className="ml-[6px] flex gap-x-[0.4px]">{files.map((f, i) => <DockItem key={i} icon={f} />)}</div>
      </div>
    </div>
  );
}

export default function App() {
  return (
    <div className="h-[1080px] w-[1920px] overflow-hidden bg-[#06253a]">
      <MenuBar />
      <div className="mt-px h-[1013px] overflow-hidden rounded-[4px] bg-[#a2a2a2]">
        <TitleBar />
        <ToolBar />
        <div className={`${UI} flex h-[937px] text-[11px] leading-none text-[#0a0a0a]`}>
          <div className="flex w-[1366px] flex-col">
            <div className="flex h-[551px]"><Hierarchy /><Game /></div>
            <div className="h-1" />
            <Project />
          </div>
          <Inspector />
        </div>
      </div>
      <Dock />
    </div>
  );
}
